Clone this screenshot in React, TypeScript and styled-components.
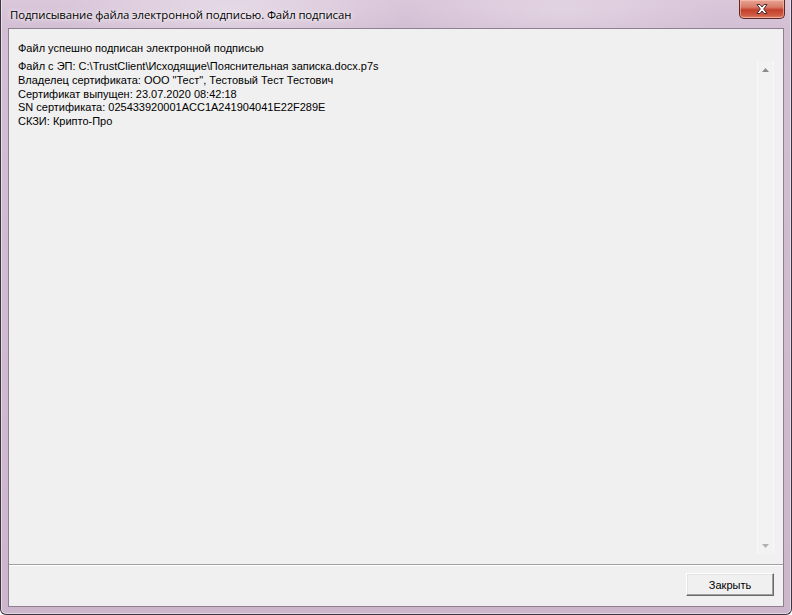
import React from "react";
import styled, { createGlobalStyle } from "styled-components";

const Global = createGlobalStyle`
  html, body { margin: 0; padding: 0; background: #ffffff; }
  body { width: 792px; height: 615px; overflow: hidden; }
  #root { width: 792px; height: 615px; }
`;

const Window = styled.div`
  box-sizing: border-box;
  width: 792px;
  height: 615px;
  display: flex;
  flex-direction: column;
  border: 1px solid #3d3540;
  border-top: none;
  border-radius: 0 0 6px 6px;
  background:
    radial-gradient(ellipse 180px 40px at 230px 10px, rgba(255,255,255,0.35), transparent),
    radial-gradient(ellipse 160px 40px at 560px 12px, rgba(255,255,255,0.25), transparent),
    linear-gradient(180deg, #dac7da 0px, #d3bfd4 30px, #cbb6cc 100%);
  box-shadow: inset 1px 0 0 rgba(255,255,255,0.45), inset -1px 0 0 rgba(255,255,255,0.45),
    inset 0 -1px 0 rgba(255,255,255,0.45);
  overflow: hidden;
`;

const TitleBar = styled.div`
  height: 28px;
  flex: none;
  display: flex;
  align-items: flex-start;
  justify-content: space-between;
  padding: 0 6px 0 9px;
`;

const Title = styled.div`
  font-family: "Open Sans", "Noto Sans", sans-serif;
  font-size: 11.4px;
  letter-spacing: -0.12px;
  color: #000;
  padding-top: 7px;
  text-shadow: 0 0 6px rgba(255, 255, 255, 0.9), 0 0 3px rgba(255, 255, 255, 0.8);
`;

const CloseButton = styled.div`
  width: 46px;
  height: 19px;
  box-sizing: border-box;
  border: 1px solid #5b2a26;
  border-top: none;
  border-radius: 0 0 5px 5px;
  background: linear-gradient(180deg, #e9a595 0%, #d77a66 40%, #c2402c 55%, #cf5a42 85%, #e08a70 100%);
  box-shadow: inset 0 0 0 1px rgba(255, 200, 190, 0.55);
  display: flex;
  align-items: center;
  justify-content: center;
`;

const Client = styled.div`
  flex: 1;
  margin: 0 7px 7px 7px;
  border: 1px solid #8d7e90;
  background: #f0f0f0;
  display: flex;
  flex-direction: column;
  font-family: "Liberation Sans", Arial, sans-serif;
  font-size: 11px;
  color: #000;
`;

const MainPanel = styled.div`
  flex: 1;
  display: flex;
  flex-direction: column;
  padding: 12px 9px 10px 9px;
  min-height: 0;
`;

const Label = styled.div`
  line-height: 14px;
  height: 14px;
  margin-bottom: 5px;
`;

const Memo = styled.div`
  flex: 1;
  display: flex;
  min-height: 0;
`;

const MemoText = styled.div`
  flex: 1;
  line-height: 13.75px;
  white-space: pre;
`;

const ScrollBar = styled.div`
  width: 17px;
  margin-top: 1px;
  box-sizing: border-box;
  border-left: 1px solid #f8f8f8;
  border-right: 1px solid #f8f8f8;
  background: #f2f2f2;
  display: flex;
  flex-direction: column;
  justify-content: space-between;
  align-items: center;
  padding: 7px 0 6px 0;
`;

const Separator = styled.div`
  height: 1px;
  flex: none;
  background: #a0a0a0;
  box-shadow: 0 1px 0 #ffffff;
`;

const ButtonBar = styled.div`
  box-sizing: border-box;
  height: 41px;
  flex: none;
  display: flex;
  justify-content: flex-end;
  align-items: flex-start;
  padding: 8px 9px 0 0;
`;

const Button = styled.button`
  width: 88px;
  height: 23px;
  box-sizing: border-box;
  font-family: "Liberation Sans", Arial, sans-serif;
  font-size: 11px;
  color: #000;
  background: #f0f0f0;
  border: 1px solid;
  border-color: #ffffff #696969 #696969 #ffffff;
  box-shadow: inset -1px -1px 0 #a0a0a0, inset 1px 1px 0 #e3e3e3;
  padding: 0;
`;

const Arrow = ({ up }: { up?: boolean }) => (
  <svg width="7" height="4" viewBox="0 0 7 4">
    {up ? <path d="M0 4 L3.5 0 L7 4 Z" fill="#8c8c8c" /> : <path d="M0 0 L3.5 4 L7 0 Z" fill="#b0b0b0" />}
  </svg>
);

const lines = [
  "Файл с ЭП: C:\\TrustClient\\Исходящие\\Пояснительная записка.docx.p7s",
  "Владелец сертификата: ООО \"Тест\", Тестовый Тест Тестович",
  "Сертификат выпущен: 23.07.2020 08:42:18",
  "SN сертификата: 025433920001ACC1A241904041E22F289E",
  "СКЗИ: Крипто-Про",
];

export default function App() {
  return (
    <>
      <Global />
      <Window>
        <TitleBar>
          <Title>Подписывание файла электронной подписью. Файл подписан</Title>
          <CloseButton>
            <svg width="14" height="12" viewBox="0 0 14 12">
              <path
                d="M2 1.5 L5 1.5 L7 4 L9 1.5 L12 1.5 L8.7 6 L12 10.5 L9 10.5 L7 8 L5 10.5 L2 10.5 L5.3 6 Z"
                fill="#ffffff"
                stroke="#4a2b30"
                strokeWidth="1"
                strokeLinejoin="round"
              />
            </svg>
          </CloseButton>
        </TitleBar>
        <Client>
          <MainPanel>
            <Label>Файл успешно подписан электронной подписью</Label>
            <Memo>
              <MemoText>{lines.join("\n")}</MemoText>
              <ScrollBar>
                <Arrow up />
                <Arrow />
              </ScrollBar>
            </Memo>
          </MainPanel>
          <Separator />
          <ButtonBar>
            <Button>Закрыть</Button>
          </ButtonBar>
        </Client>
      </Window>
    </>
  );
}
